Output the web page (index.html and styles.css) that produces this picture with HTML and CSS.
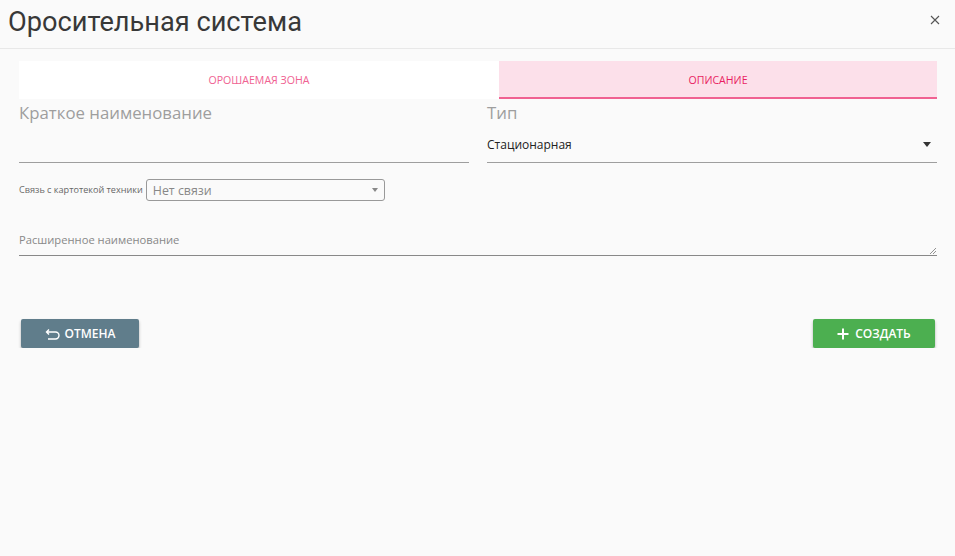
FILE: index.html
```html
<!DOCTYPE html>
<html>

<head>
    <meta name="viewport" content="width=device-width, initial-scale=1.0">
    <link rel="stylesheet" href="styles.css">
</head>

<body>
    <div class="dialog">
        <div class="dialog-header">
            <h1 class="dialog-title">Оросительная система</h1>
            <svg class="close" width="10" height="10" viewBox="0 0 10 10">
                <path d="M1 1 L9 9 M9 1 L1 9" stroke="#555" stroke-width="1.1" />
            </svg>
        </div>

        <div class="dialog-body">
            <div class="tabs">
                <div class="tab">ОРОШАЕМАЯ ЗОНА</div>
                <div class="tab active">ОПИСАНИЕ</div>
            </div>

            <div class="row">
                <div class="field">
                    <div class="field-label">Краткое наименование</div>
                    <div class="field-input"></div>
                </div>
                <div class="field">
                    <div class="field-label">Тип</div>
                    <div class="field-input select">
                        <span>Стационарная</span>
                        <span class="caret"></span>
                    </div>
                </div>
            </div>

            <div class="link-row">
                <span class="link-label">Связь с картотекой техники</span>
                <div class="small-select">
                    <span>Нет связи</span>
                    <span class="small-caret"></span>
                </div>
            </div>

            <div class="textarea">
                <span>Расширенное наименование</span>
                <svg class="resize" width="6" height="6" viewBox="0 0 6 6">
                    <path d="M0 6 L6 0 M3 6 L6 3" stroke="#777" stroke-width="0.8" />
                </svg>
            </div>

            <div class="actions">
                <button class="btn btn-cancel">
                    <svg width="16" height="12" viewBox="0 0 16 12">
                        <path d="M4 1.5 L1.5 4 L4 6.5 M1.5 4 H10.5 A3.5 3.5 0 0 1 10.5 11 H3" fill="none" stroke="white" stroke-width="1.4" />
                    </svg>
                    ОТМЕНА
                </button>
                <button class="btn btn-create">
                    <svg width="12" height="12" viewBox="0 0 12 12">
                        <path d="M6 0.5 V11.5 M0.5 6 H11.5" stroke="white" stroke-width="2" />
                    </svg>
                    СОЗДАТЬ
                </button>
            </div>
        </div>
    </div>
</body>

</html>
```

FILE: styles.css
```css
* {
    box-sizing: border-box;
}

body {
    margin: 0;
    background: #fafafa;
    font-family: 'Open Sans', 'Noto Sans', sans-serif;
    color: #222;
}

.dialog-header {
    height: 49px;
    border-bottom: 1px solid #e8e8e8;
    display: flex;
    align-items: center;
    justify-content: space-between;
    padding: 0 14px 0 8px;
}

.dialog-title {
    margin: 0;
    font-family: 'Roboto', sans-serif;
    font-weight: 400;
    font-size: 27.2px;
    color: #383838;
    padding-bottom: 4px;
}

.close {
    margin-bottom: 8px;
    margin-right: 1px;
}

.dialog-body {
    padding: 12px 18px 0 19px;
}

.tabs {
    display: flex;
    height: 38px;
}

.tab {
    flex: 0 0 480px;
    background: white;
    color: #f06292;
    font-size: 10.6px;
    display: flex;
    align-items: center;
    justify-content: center;
}

.tab.active {
    flex: 1;
    background: #fce0ea;
    color: #e91e63;
    border-bottom: 2px solid #f06292;
    padding-top: 2px;
}

.row {
    display: flex;
    gap: 18px;
}

.field {
    flex: 1;
}

.field-label {
    font-size: 16.8px;
    color: #9e9e9e;
    margin-top: 2px;
    line-height: 24px;
}

.field-input {
    height: 38px;
    border-bottom: 1px solid #9e9e9e;
}

.field-input.select {
    display: flex;
    align-items: center;
    justify-content: space-between;
    font-size: 12px;
    color: #222;
    padding-top: 2px;
}

.caret {
    width: 0;
    height: 0;
    border-left: 4.5px solid transparent;
    border-right: 4.5px solid transparent;
    border-top: 5px solid #333;
    margin-right: 6px;
}

.link-row {
    display: flex;
    align-items: center;
    margin-top: 16px;
}

.link-label {
    font-size: 9.1px;
    color: #666;
    margin-right: 3px;
    padding-bottom: 2px;
}

.small-select {
    width: 239px;
    height: 22px;
    border: 1px solid #999;
    border-radius: 3px;
    background: #fafafa;
    display: flex;
    align-items: center;
    justify-content: space-between;
    padding: 0 6px;
    font-size: 12.4px;
    color: #888;
}

.small-caret {
    width: 0;
    height: 0;
    border-left: 3px solid transparent;
    border-right: 3px solid transparent;
    border-top: 4px solid #888;
}

.textarea {
    margin-top: 28px;
    height: 27px;
    padding-top: 3px;
    border-bottom: 1px solid #888;
    font-size: 11.2px;
    color: #888;
    position: relative;
}

.resize {
    position: absolute;
    right: 1px;
    bottom: 1px;
}

.actions {
    display: flex;
    justify-content: space-between;
    margin-top: 63px;
    padding: 0 2px 0 2px;
}

.btn {
    height: 29px;
    border: none;
    border-radius: 2px;
    color: white;
    font-family: 'Open Sans', sans-serif;
    font-size: 12px;
    font-weight: 600;
    display: flex;
    align-items: center;
    justify-content: center;
    gap: 4px;
    box-shadow: 0 2px 3px rgba(0, 0, 0, 0.3);
}

.btn-cancel {
    width: 118px;
    background: #607d8b;
}

.btn-create {
    width: 122px;
    background: #4caf50;
    gap: 6px;
}
```
